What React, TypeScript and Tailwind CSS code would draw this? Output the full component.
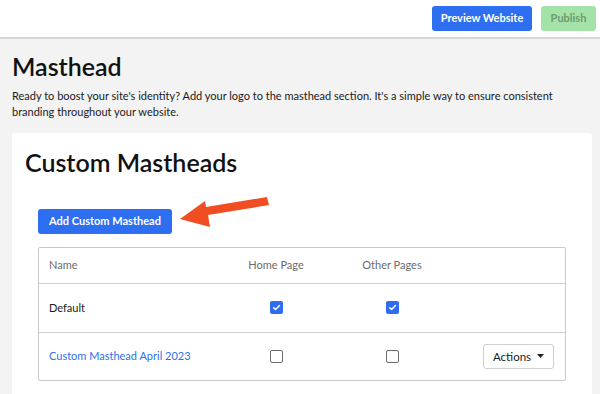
import React from "react";

function Check({ checked }: { checked: boolean }) {
  if (checked) {
    return (
      <span className="flex h-[13px] w-[13px] items-center justify-center rounded-[2px] bg-[#2f6cf0]">
        <svg width="9" height="9" viewBox="0 0 10 10" fill="none">
          <path d="M1.8 5.2 L4 7.3 L8.3 2.8" stroke="white" strokeWidth="1.6" strokeLinecap="round" strokeLinejoin="round" />
        </svg>
      </span>
    );
  }
  return <span className="block h-[13px] w-[13px] rounded-[2px] border-[1.5px] border-[#6b6b6b] bg-white" />;
}

export default function App() {
  return (
    <div className="h-[394px] w-[600px] overflow-hidden bg-[#f3f3f3]" style={{ fontFamily: "Lato, 'Noto Sans', sans-serif" }}>
      <div className="flex h-[39px] items-center justify-end gap-[9px] border-b-2 border-[#d6d6d6] bg-white pr-[4px]">
        <button className="h-[25px] w-[100px] rounded-[3px] bg-[#2d6ff0] text-[11px] font-bold text-white">Preview Website</button>
        <button className="h-[25px] w-[55px] rounded-[3px] bg-[#a3e3a7] text-[11px] font-bold text-[#6f9a72]">Publish</button>
      </div>
      <div className="px-[12px]">
        <h1 className="mt-[12px] text-[25px] font-semibold leading-[30px] text-[#111]">Masthead</h1>
        <p className="mt-[7px] max-w-[550px] text-[11px] leading-[16px] text-[#1a1a1a]">
          Ready to boost your site's identity? Add your logo to the masthead section. It's a simple way to ensure consistent branding throughout your website.
        </p>
        <div className="mt-[13px] h-[300px] w-[580px] rounded-[3px] bg-white px-[13px] pt-[13px]">
          <h2 className="text-[25px] font-semibold leading-[32px] text-[#111]">Custom Mastheads</h2>
          <div className="relative mt-[29px] pl-[13px]">
            <button className="h-[25px] w-[134px] rounded-[3px] bg-[#2d6ff0] text-[11px] font-bold text-white">Add Custom Masthead</button>
            <svg className="absolute left-[150px] top-[-14px]" width="100" height="40" viewBox="0 0 100 40">
              <path d="M92 4 L31 14 L30 8 L5 26 L35 34 L33 22 L94 12 Z" fill="#f04d22" />
            </svg>
          </div>
          <div className="ml-[13px] mt-[13px] w-[528px] rounded-[2px] border border-[#c9c9c9]">
            <div className="grid h-[36px] grid-cols-[180px_114px_118px_1fr] items-center border-b border-[#cfcfcf] text-[11px] text-[#6b6b6b]">
              <div className="pl-[10px]">Name</div>
              <div className="text-center">Home Page</div>
              <div className="text-center">Other Pages</div>
              <div />
            </div>
            <div className="grid h-[49px] grid-cols-[180px_114px_118px_1fr] items-center border-b border-[#cfcfcf] text-[11px]">
              <div className="pl-[10px] text-[#1a1a1a]">Default</div>
              <div className="flex justify-center"><Check checked /></div>
              <div className="flex justify-center"><Check checked /></div>
              <div />
            </div>
            <div className="grid h-[47px] grid-cols-[180px_114px_118px_1fr] items-center text-[11px]">
              <div className="pl-[10px] text-[#2d6ff0]">Custom Masthead April 2023</div>
              <div className="flex justify-center"><Check checked={false} /></div>
              <div className="flex justify-center"><Check checked={false} /></div>
              <div className="flex justify-end pr-[11px]">
                <button className="flex h-[25px] w-[71px] items-center justify-center gap-[6px] rounded-[3px] border border-[#cfcfcf] bg-white text-[11.5px] text-[#1a1a1a]">
                  Actions
                  <svg width="7" height="4" viewBox="0 0 7 4"><path d="M0 0 L7 0 L3.5 4 Z" fill="#222" /></svg>
                </button>
              </div>
            </div>
          </div>
        </div>
      </div>
    </div>
  );
}
